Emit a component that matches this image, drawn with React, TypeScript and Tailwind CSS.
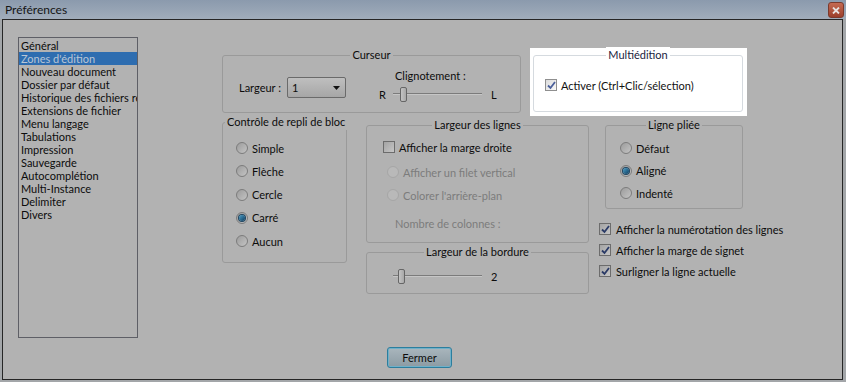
import type { ReactNode } from "react";

const FONT = "font-['Lato',sans-serif]";

const LIST_ITEMS = [
  "Général",
  "Zones d'édition",
  "Nouveau document",
  "Dossier par défaut",
  "Historique des fichiers récents",
  "Extensions de fichier",
  "Menu langage",
  "Tabulations",
  "Impression",
  "Sauvegarde",
  "Autocomplétion",
  "Multi-Instance",
  "Delimiter",
  "Divers",
];

function GroupBox({
  title,
  className,
  align = "center",
  light = false,
  children,
}: {
  title: string;
  className: string;
  align?: "center" | "left";
  light?: boolean;
  children?: ReactNode;
}) {
  return (
    <div
      className={`relative rounded-[3px] border ${
        light ? "border-[#d5dadf]" : "border-[#9a9a9a]"
      } ${className}`}
    >
      <div
        className={`absolute -top-[9px] flex ${
          align === "center" ? "left-0 right-0 justify-center" : "left-[2px]"
        }`}
      >
        <span
          className={`whitespace-nowrap px-[2px] leading-[16px] ${
            light ? "bg-white text-[#1a2440]" : "bg-[#b2b2b2] text-[#0c0c0c]"
          }`}
        >
          {title}
        </span>
      </div>
      {children}
    </div>
  );
}

function Radio({ checked = false, disabled = false }: { checked?: boolean; disabled?: boolean }) {
  return (
    <span
      className={`flex h-[12px] w-[12px] shrink-0 items-center justify-center rounded-full border ${
        disabled
          ? "border-[#a6a6a6] bg-[#b9b9b9]"
          : "border-[#7c7c7c] bg-gradient-to-br from-[#9c9c9c] to-[#c4c4c4]"
      }`}
    >
      {checked && (
        <span className="h-[6px] w-[6px] rounded-full bg-gradient-to-br from-[#4ea0c8] to-[#0d3f62] ring-1 ring-[#1f4560]" />
      )}
    </span>
  );
}

function Check({ checked = false, light = false }: { checked?: boolean; light?: boolean }) {
  return (
    <span
      className={`flex h-[12px] w-[12px] shrink-0 items-center justify-center border ${
        light
          ? "border-[#8f8f8f] bg-gradient-to-br from-[#dcdcdc] to-[#f8f8f8]"
          : "border-[#6c6c6c] bg-gradient-to-br from-[#a3a3a3] to-[#c6c6c6]"
      }`}
    >
      {checked && (
        <svg width="9" height="9" viewBox="0 0 9 9">
          <path
            d="M1 4.5 L3.5 7 L8 1"
            fill="none"
            stroke={light ? "#4a5f9a" : "#2a3a66"}
            strokeWidth="1.8"
          />
        </svg>
      )}
    </span>
  );
}

function Slider({ thumbLeft }: { thumbLeft: number }) {
  return (
    <div className="relative h-[15px] w-[89px] shrink-0">
      <div className="absolute left-0 right-0 top-[6px] h-[2px] border-t border-[#7b7b7b] bg-[#c6c6c6]" />
      <div
        className="absolute top-0 h-[15px] w-[7px] rounded-[2px] border border-[#666] bg-gradient-to-r from-[#c4c4c4] to-[#a8a8a8]"
        style={{ left: thumbLeft }}
      />
    </div>
  );
}

export default function App() {
  return (
    <div className={`flex h-[382px] w-[846px] flex-col bg-[#a3a6a9] text-[11px] leading-[15px] text-[#0c0c0c] ${FONT}`}>
      {/* title bar */}
      <div className="flex h-[19px] items-center bg-gradient-to-b from-[#8b9aad] to-[#a1adbb] pl-[5px] pr-[2px]">
        <span className="flex-1 text-[12px] leading-none text-[#151515]">Préférences</span>
        <div className="mt-[1px] flex h-[16px] w-[16px] items-center justify-center rounded-[3px] border border-[#7b3a2d] bg-gradient-to-b from-[#c56a52] to-[#9c3f2b]">
          <svg width="8" height="7" viewBox="0 0 8 7">
            <path d="M1 0.5 L7 6.5 M7 0.5 L1 6.5" stroke="#e8e2e0" strokeWidth="1.8" />
          </svg>
        </div>
      </div>

      <div className="flex-1 pb-[2px] pl-[2px] pr-[3px]">
        <div className="flex h-full flex-col border border-[#262626] bg-[#b2b2b2] pl-[15px] pt-[17px]">
          <div className="flex items-start">
            {/* category list */}
            <div className="h-[301px] w-[120px] shrink-0 overflow-hidden border border-[#5e5f66] pt-[1px]">
              {LIST_ITEMS.map((item, i) => (
                <div
                  key={item}
                  className={`h-[13px] whitespace-nowrap pl-[2px] leading-[13px] ${
                    i === 1 ? "bg-[#2e6db0] text-[#b9c6d6]" : ""
                  }`}
                >
                  {item}
                </div>
              ))}
            </div>

            <div className="ml-[84px] flex flex-col">
              {/* row 1 */}
              <div className="flex items-start">
                <GroupBox title="Curseur" className="mt-[18px] h-[58px] w-[299px] shrink-0">
                  <div className="flex items-start pl-[16px]">
                    <div className="mt-[21px] flex items-center">
                      <span className="w-[48px]">Largeur :</span>
                      <div className="flex h-[21px] w-[59px] items-center justify-between rounded-[2px] border border-[#6a6a6a] bg-gradient-to-b from-[#bfbfbf] to-[#a6a6a6] pl-[4px] pr-[5px]">
                        <span>1</span>
                        <svg width="7" height="4" viewBox="0 0 7 4">
                          <path d="M0 0 L7 0 L3.5 4 Z" fill="#111" />
                        </svg>
                      </div>
                    </div>
                    <div className="ml-[33px] mt-[12px] flex flex-col">
                      <span className="ml-[16px]">Clignotement :</span>
                      <div className="mt-[4px] flex items-center">
                        <span className="w-[14px]">R</span>
                        <Slider thumbLeft={7} />
                        <span className="ml-[9px]">L</span>
                      </div>
                    </div>
                  </div>
                </GroupBox>

                <div className="ml-[9px] mt-[11px] h-[68px] w-[217px] shrink-0 bg-white pl-[3px] pt-[7px]">
                  <GroupBox title="Multiédition" light className="h-[57px] w-[210px]">
                    <div className="mt-[23px] flex h-[12px] items-center gap-[4px] pl-[11px] text-[#111]">
                      <Check checked light />
                      <span className="whitespace-nowrap">Activer (Ctrl+Clic/sélection)</span>
                    </div>
                  </GroupBox>
                </div>
              </div>

              {/* row 2 */}
              <div className="flex items-start">
                <GroupBox title="Contrôle de repli de bloc" align="left" className="mt-[6px] h-[141px] w-[125px] shrink-0">
                  <div className="flex flex-col gap-[11.3px] pl-[13px] pt-[19px]">
                    {["Simple", "Flèche", "Cercle", "Carré", "Aucun"].map((r) => (
                      <div key={r} className="flex h-[12px] items-center gap-[4px]">
                        <Radio checked={r === "Carré"} />
                        <span>{r}</span>
                      </div>
                    ))}
                  </div>
                </GroupBox>

                <div className="ml-[19px] mt-[9px] flex flex-col">
                  <GroupBox title="Largeur des lignes" className="h-[118px] w-[223px]">
                    <div className="flex flex-col pl-[16px] pt-[15px]">
                      <div className="flex h-[12px] items-center gap-[4px]">
                        <Check />
                        <span>Afficher la marge droite</span>
                      </div>
                      <div className="ml-[4px] mt-[13px] flex h-[12px] items-center gap-[4px] text-[#7c7c7c]">
                        <Radio disabled />
                        <span>Afficher un filet vertical</span>
                      </div>
                      <div className="ml-[4px] mt-[11px] flex h-[12px] items-center gap-[4px] text-[#7c7c7c]">
                        <Radio disabled />
                        <span>Colorer l'arrière-plan</span>
                      </div>
                      <span className="ml-[12px] mt-[15px] text-[#7c7c7c]">Nombre de colonnes :</span>
                    </div>
                  </GroupBox>
                  <GroupBox title="Largeur de la bordure" className="mt-[9px] h-[42px] w-[223px]">
                    <div className="flex items-center pl-[26px] pt-[16px]">
                      <Slider thumbLeft={5} />
                      <span className="ml-[9px]">2</span>
                    </div>
                  </GroupBox>
                </div>

                <div className="ml-[10px] mt-[9px] flex flex-col">
                  <GroupBox title="Ligne pliée" className="ml-[6px] h-[84px] w-[138px]">
                    <div className="flex flex-col gap-[10.5px] pl-[14px] pt-[16px]">
                      {["Défaut", "Aligné", "Indenté"].map((r) => (
                        <div key={r} className="flex h-[12px] items-center gap-[4px]">
                          <Radio checked={r === "Aligné"} />
                          <span>{r}</span>
                        </div>
                      ))}
                    </div>
                  </GroupBox>
                  <div className="mt-[14px] flex flex-col gap-[9px]">
                    {[
                      "Afficher la numérotation des lignes",
                      "Afficher la marge de signet",
                      "Surligner la ligne actuelle",
                    ].map((c) => (
                      <div key={c} className="flex h-[12px] items-center gap-[5px] whitespace-nowrap">
                        <Check checked />
                        <span>{c}</span>
                      </div>
                    ))}
                  </div>
                </div>
              </div>
            </div>
          </div>

          <div className="ml-[369px] mt-[9px]">
            <button className="flex h-[21px] w-[65px] items-center justify-center rounded-[3px] border border-[#2b7e9e] bg-gradient-to-b from-[#a9b6bd] to-[#8c9ba3] text-[11px] text-[#0c0c0c] shadow-[inset_0_0_0_1px_#6fb0c8]">
              Fermer
            </button>
          </div>
        </div>
      </div>
    </div>
  );
}
